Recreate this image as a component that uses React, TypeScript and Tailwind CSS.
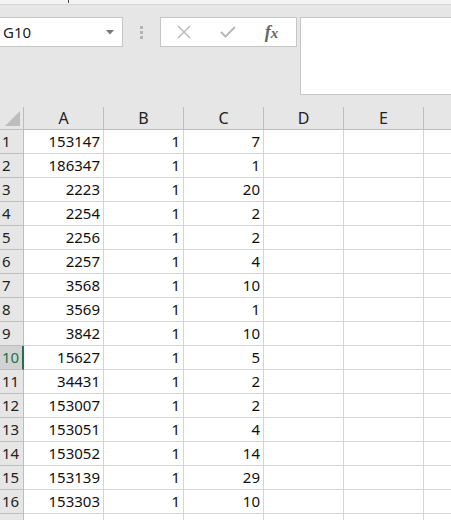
import React from "react";

const rows: [number, number, number][] = [
  [153147, 1, 7],
  [186347, 1, 1],
  [2223, 1, 20],
  [2254, 1, 2],
  [2256, 1, 2],
  [2257, 1, 4],
  [3568, 1, 10],
  [3569, 1, 1],
  [3842, 1, 10],
  [15627, 1, 5],
  [34431, 1, 2],
  [153007, 1, 2],
  [153051, 1, 4],
  [153052, 1, 14],
  [153139, 1, 29],
  [153303, 1, 10],
];

const cols = ["A", "B", "C", "D", "E", ""];

function Toolbar() {
  return (
    <div className="flex items-start h-[102px] pt-[12px]">
      {/* name box */}
      <div className="w-[123px] h-[30px] bg-white border border-l-0 border-[#c6c6c6] flex items-center justify-between pl-[3px] pr-[8px]">
        <span className="text-[15px] text-[#222]">G10</span>
        <svg width="8" height="5" viewBox="0 0 8 5">
          <path d="M0 0 H8 L4 4.5 Z" fill="#777" />
        </svg>
      </div>
      <div className="w-[37px] h-[30px] flex flex-col items-center justify-center gap-[2px]">
        <span className="w-[3px] h-[3px] bg-[#b4b4b4]" />
        <span className="w-[3px] h-[3px] bg-[#b4b4b4]" />
        <span className="w-[3px] h-[3px] bg-[#b4b4b4]" />
      </div>
      {/* cancel / enter / fx */}
      <div className="w-[137px] h-[30px] bg-white border border-[#c6c6c6] flex items-center">
        <div className="w-[44px] flex justify-center pl-[1px]">
          <svg width="14" height="14" viewBox="0 0 14 14">
            <path d="M1 1 L13 13 M13 1 L1 13" stroke="#b9b9b9" strokeWidth="1.4" />
          </svg>
        </div>
        <div className="w-[46px] flex justify-center">
          <svg width="16" height="12" viewBox="0 0 16 12">
            <path d="M1 6 L5.5 10.5 L15 1" stroke="#b9b9b9" strokeWidth="2" fill="none" />
          </svg>
        </div>
        <div className="flex-1 flex justify-center pr-[4px]">
          <span className="font-['Liberation_Serif',serif] italic font-bold text-[18px] text-[#666] leading-none">
            f<span className="text-[15px]">x</span>
          </span>
        </div>
      </div>
      <div className="ml-[3px] flex-1 h-[78px] bg-white border border-r-0 border-[#c6c6c6]" />
    </div>
  );
}

function Sheet() {
  return (
    <div className="grid grid-cols-[24px_80px_80px_80px_80px_80px_80px] w-[451px] overflow-hidden font-['Noto_Sans',sans-serif] text-[15px] text-[#111]">
      {/* header row */}
      <div className="h-[23px] bg-[#e6e6e6] border-r border-b border-[#bdbdbd] flex items-end justify-end pr-[3px] pb-[3px]">
        <svg width="15" height="15" viewBox="0 0 15 15">
          <path d="M15 0 V15 H0 Z" fill="#bdbdbd" />
        </svg>
      </div>
      {cols.map((c, i) => (
        <div
          key={i}
          className="h-[23px] bg-[#e6e6e6] border-r border-b border-[#bdbdbd] flex items-center justify-center text-[16px] text-[#222]"
        >
          {c}
        </div>
      ))}
      {rows.map((r, i) => {
        const active = i === 9;
        return (
          <React.Fragment key={i}>
            <div
              className={
                active
                  ? "h-[24px] bg-[#d2d2d2] border-r-2 border-r-[#217346] border-b border-b-[#bdbdbd] flex items-center pl-[2px] text-[#217346]"
                  : "h-[24px] bg-[#e6e6e6] border-r border-b border-[#bdbdbd] flex items-center pl-[2px] text-[#222]"
              }
            >
              {i + 1}
            </div>
            {r.map((v, j) => (
              <div
                key={j}
                className="h-[24px] bg-white border-r border-b border-[#d4d4d4] flex items-center justify-end pr-[3px]"
              >
                {v}
              </div>
            ))}
            <div className="h-[24px] bg-white border-r border-b border-[#d4d4d4]" />
            <div className="h-[24px] bg-white border-r border-b border-[#d4d4d4]" />
            <div className="h-[24px] bg-white border-r border-b border-[#d4d4d4]" />
          </React.Fragment>
        );
      })}
      {/* row 17, cut off at the bottom */}
      <div className="h-[24px] bg-[#e6e6e6] border-r border-[#bdbdbd]" />
      {cols.map((_, i) => (
        <div key={i} className="h-[24px] bg-white border-r border-[#d4d4d4]" />
      ))}
    </div>
  );
}

export default function App() {
  return (
    <div className="w-[451px] h-[520px] overflow-hidden bg-[#e6e6e6] font-['Noto_Sans',sans-serif]">
      <div className="h-[5px] bg-[#f3f3f3] border-b border-[#d5d5d5] relative">
        <span className="absolute left-[68px] top-0 w-px h-[3px] bg-[#444]" />
      </div>
      <Toolbar />
      <Sheet />
    </div>
  );
}
